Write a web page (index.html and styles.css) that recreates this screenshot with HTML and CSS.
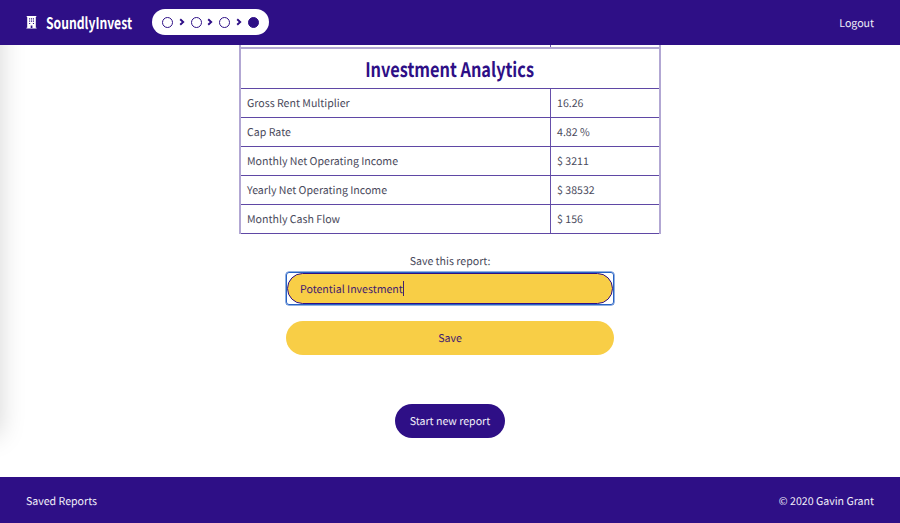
FILE: index.html
```html
<!DOCTYPE html>
<html lang="en">
<head>
<meta charset="utf-8">
<title>SoundlyInvest</title>
<link rel="stylesheet" href="styles.css">
</head>
<body>
<header class="bar header">
  <svg class="building" viewBox="0 0 11 13" aria-hidden="true"><path fill="#fff" fill-rule="evenodd" d="M.7 0H10.300V.9H9.800V11.700H10.600V12.600H.4V11.700H1.200V.9H.7ZM3.100 2.200V3.400H4.200V2.200ZM5 2.200V3.400H6.100V2.200ZM6.900 2.200V3.400H8V2.200ZM3.100 4.600V5.800H4.200V4.600ZM5 4.600V5.800H6.100V4.600ZM6.900 4.600V5.800H8V4.600ZM3.100 7V8.100H4.200V7ZM6.900 7V8.100H8V7ZM4.700 9.500V12H6.400V9.500Z"/></svg>
  <span class="brand"><span class="brand-text">SoundlyInvest</span></span>
  <nav class="steps">
    <i class="dot"></i>
    <svg class="chev" viewBox="0 0 6 8"><path d="M1.200 1.200L4.200 4L1.200 6.800"/></svg>
    <i class="dot"></i>
    <svg class="chev" viewBox="0 0 6 8"><path d="M1.200 1.200L4.200 4L1.200 6.800"/></svg>
    <i class="dot"></i>
    <svg class="chev" viewBox="0 0 6 8"><path d="M1.200 1.200L4.200 4L1.200 6.800"/></svg>
    <i class="dot full"></i>
  </nav>
  <span class="logout">Logout</span>
</header>
<main>
  <div class="drawer-shadow"></div>
  <section class="report">
    <div class="row previous"><span></span><span class="value"></span></div>
    <h2><span>Investment Analytics</span></h2>
    <div class="row"><span>Gross Rent Multiplier</span><span class="value">16.26</span></div>
    <div class="row"><span>Cap Rate</span><span class="value">4.82 %</span></div>
    <div class="row"><span>Monthly Net Operating Income</span><span class="value">$ 3211</span></div>
    <div class="row"><span>Yearly Net Operating Income</span><span class="value">$ 38532</span></div>
    <div class="row"><span>Monthly Cash Flow</span><span class="value">$ 156</span></div>
  </section>
  <div class="label">Save this report:</div>
  <div class="focus"><div class="field"><span class="typed">Potential Investment</span><i class="caret"></i></div></div>
  <div class="save">Save</div>
  <div class="start">Start new report</div>
</main>
<footer class="bar footer"><span>Saved Reports</span><span>© 2020 Gavin Grant</span></footer>
</body>
</html>
```
FILE: styles.css
```css
* { box-sizing: border-box; }
body {
  margin: 0;
  height: 523px;
  display: flex;
  flex-direction: column;
  overflow: hidden;
  background: #fff;
  color: #4a4a5c;
  font: 10.6px/16px "Noto Sans CJK SC", sans-serif;
  text-rendering: geometricPrecision;
}
.bar {
  display: flex;
  align-items: center;
  padding: 0 26px;
  background: #2e0f86;
  color: #f0edf8;
  flex: none;
}
.header { height: 45px; }
.footer { height: 46px; padding-top: 4px; justify-content: space-between; }
.building { width: 11px; height: 13px; }
.brand {
  width: 87px;
  margin-left: 9px;
  margin-top: -1px;
  color: #fff;
  font-size: 16px;
  font-weight: 700;
  line-height: 22px;
  white-space: nowrap;
}
.brand-text { display: inline-block; transform: scaleX(.76); transform-origin: left; }
.steps {
  display: flex;
  align-items: center;
  justify-content: space-between;
  width: 117px;
  height: 26px;
  margin-left: 19px;
  margin-top: -1px;
  padding: 0 10px;
  border-radius: 13px;
  background: #fff;
}
.dot { width: 11px; height: 11px; border: 1px solid #2e0f86; border-radius: 50%; }
.full { background: #2e0f86; }
.chev { width: 6px; height: 8px; fill: none; stroke: #2e0f86; stroke-width: 1.9; }
.logout { margin-left: auto; margin-top: 3px; }
main {
  position: relative;
  height: 432px;
  display: flex;
  flex-direction: column;
  align-items: center;
  overflow: hidden;
}
.drawer-shadow {
  position: absolute;
  left: -30px;
  top: -60px;
  width: 30px;
  height: 450px;
  box-shadow: 0 0 26px rgba(0, 0, 0, .17);
}
.report {
  width: 422px;
  border: solid #b2a7d3;
  border-width: 0 2px;
}
.row {
  display: grid;
  grid-template-columns: 309px 1fr;
  height: 29px;
  line-height: 28px;
  border-bottom: 1px solid #5f48a5;
}
.row span { padding: 1px 0 0 6px; height: 28px; }
.row .value { border-left: 1px solid #6750aa; }
.row.previous { height: 4px; border-bottom: 2px solid #b2a7d3; }
.row.previous span { height: 2px; }
h2 {
  height: 40px;
  margin: 0;
  border-bottom: 1px solid #5f48a5;
  color: #2e0f86;
  font-size: 20px;
  line-height: 39px;
  text-align: center;
}
h2 span { display: inline-block; transform: scaleX(.815); white-space: nowrap; }
.label { margin-top: 20px; }
.focus {
  width: 328px;
  height: 33px;
  margin-top: 2px;
  border: 1px solid #2762c4;
  border-radius: 3px;
  box-shadow: 0 0 0 .5px #2762c4;
}
.field {
  display: flex;
  align-items: center;
  height: 100%;
  padding-left: 12px;
  border: 1.500px solid #2e0f86;
  border-radius: 16px;
  background: #f8ce46;
  color: #43206f;
}
.typed { padding-top: 2px; }
.caret { width: 1px; height: 15px; background: #43206f; }
.save {
  width: 328px;
  height: 34px;
  margin-top: 16px;
  border-radius: 17px;
  background: #f8ce46;
  color: #43206f;
  line-height: 36px;
  text-align: center;
}
.start {
  width: 110px;
  height: 34px;
  margin-top: 49px;
  border-radius: 17px;
  background: #2e0f86;
  color: #f0edf8;
  line-height: 36px;
  text-align: center;
}
```
